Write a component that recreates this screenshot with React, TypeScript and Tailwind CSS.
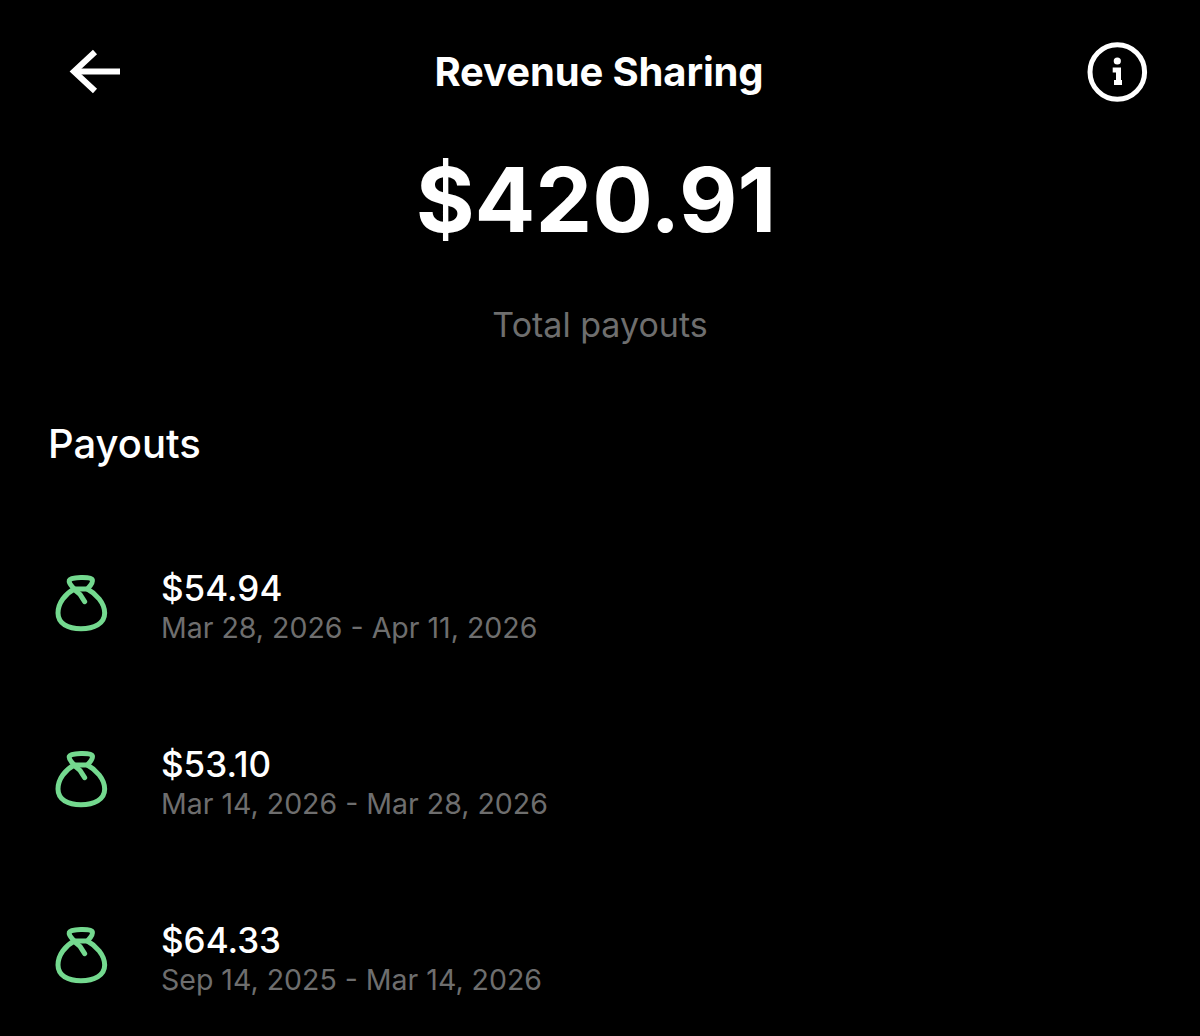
import React from 'react';

const payouts = [
  { amount: '$54.94', range: 'Mar 28, 2026 - Apr 11, 2026' },
  { amount: '$53.10', range: 'Mar 14, 2026 - Mar 28, 2026' },
  { amount: '$64.33', range: 'Sep 14, 2025 - Mar 14, 2026' },
];

const BagIcon = () => (
  <svg viewBox="0 0 240 240" className="w-20 h-20 shrink-0 text-[#74d98f]" fill="none" stroke="currentColor" strokeWidth="15" strokeLinecap="round" strokeLinejoin="round">
    <path d="M103 90 C96 82 85 74 88 64 C91 54 154 52 157 62 C160 72 149 82 142 90 Z" />
    <path d="M103 90 C76 104 54 132 54 162 C54 194 84 209 123 209 C162 209 194 194 194 162 C194 132 168 104 142 90" />
    <path d="M103 92 L120 106 L134 128" />
  </svg>
);

const App: React.FC = () => {
  return (
    <div className="w-[1200px] h-[1036px] overflow-hidden bg-black text-white font-['Inter','Liberation_Sans',sans-serif]">
      <header className="grid grid-cols-[1fr_auto_1fr] items-center h-[144px] pl-[50px] pr-[40px]">
        <svg viewBox="0 0 90 90" className="w-[90px] h-[90px]" fill="none" stroke="white" strokeWidth="6" strokeLinejoin="miter">
          <path d="M45 25 L24 44.5 L45 64" />
          <path d="M25 44.5 H70" />
        </svg>
        <h1 className="text-[40px] font-bold tracking-[-0.13px] -translate-x-[6px]">Revenue Sharing</h1>
        <svg viewBox="0 0 90 90" className="w-[90px] h-[90px] justify-self-end" fill="none" stroke="white">
          <circle cx="47.3" cy="45" r="27.3" strokeWidth="5" />
          <circle cx="47.3" cy="34" r="3.6" fill="white" stroke="none" />
          <path d="M42.7 43 H48.5 V55.5 M44 55.5 H52" strokeWidth="5" />
        </svg>
      </header>
      <div className="flex flex-col items-center">
        <div className="text-[90px] leading-[112px] font-bold -translate-x-[4px]">$420.91</div>
        <div className="mt-[49px] text-[34px] leading-[40px] text-[#6e6e6e]">Total payouts</div>
      </div>
      <h2 className="mt-[77px] pl-[48px] text-[40px] leading-[44px] font-medium">Payouts</h2>
      <div className="mt-[93px] flex flex-col gap-[96px] pl-[40px]">
        {payouts.map((p) => (
          <div key={p.amount} className="flex items-start h-[80px] gap-[41px]">
            <BagIcon />
            <div className="flex flex-col mt-[9px]">
              <span className="text-[35px] leading-[40px] font-[450]">{p.amount}</span>
              <span className="text-[28.5px] leading-[40px] text-[#6e6e6e]">{p.range}</span>
            </div>
          </div>
        ))}
      </div>
    </div>
  );
};

export default App;
